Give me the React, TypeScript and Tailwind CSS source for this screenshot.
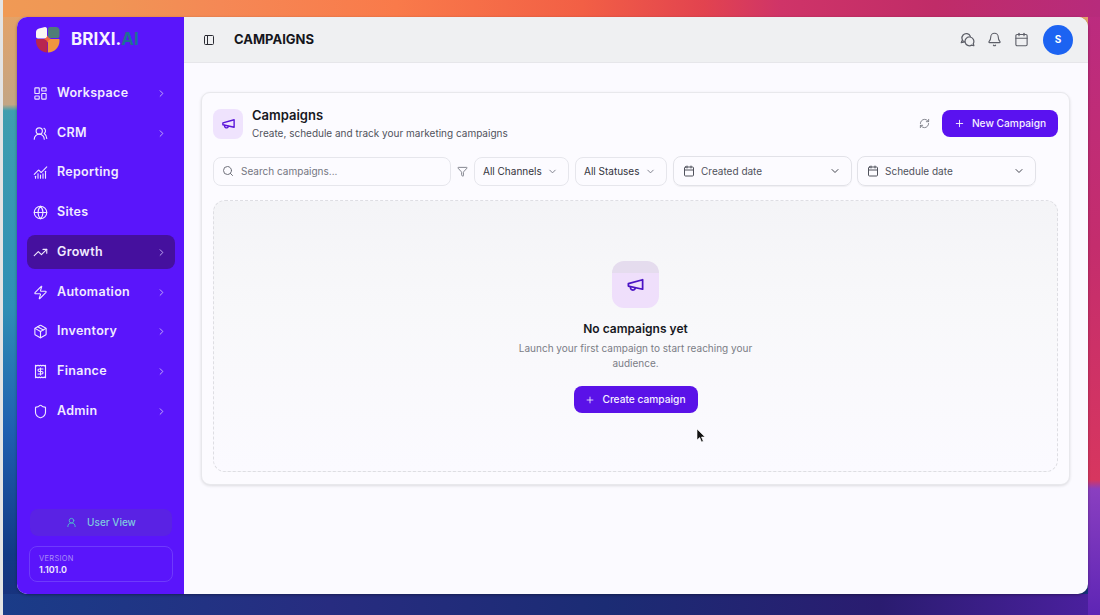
import {
  Bell,
  Calendar,
  ChartNoAxesCombined,
  ChevronDown,
  ChevronRight,
  Funnel,
  Globe,
  LayoutDashboard,
  Package,
  PanelLeft,
  Plus,
  Receipt,
  RefreshCw,
  Search,
  Shield,
  TrendingUp,
  UserRound,
  UsersRound,
  Zap,
} from "lucide-react";

const navItems = [
  { label: "Workspace", icon: LayoutDashboard, arrow: true },
  { label: "CRM", icon: UsersRound, arrow: true },
  { label: "Reporting", icon: ChartNoAxesCombined, arrow: false },
  { label: "Sites", icon: Globe, arrow: false },
  { label: "Growth", icon: TrendingUp, arrow: true, active: true },
  { label: "Automation", icon: Zap, arrow: true },
  { label: "Inventory", icon: Package, arrow: true },
  { label: "Finance", icon: Receipt, arrow: true },
  { label: "Admin", icon: Shield, arrow: true },
];

function Logo() {
  return (
    <svg width="25" height="26" viewBox="0 0 25 26" className="shrink-0">
      <path d="M1 5c0-2 1.500-3 3-3.500L10 0c1.500 0 2 1 2 2v8c0 1-1 1.500-2 1.500H3c-1.200 0-2-.8-2-2z" fill="#fbf7f4" />
      <path d="M13 2c0-1.200 1-2 2-2h6c2 0 3.500 1.500 3.500 3.500V9c0 1.500-1 2-2 2H15c-1 0-2-.5-2-2z" fill="#4f7d78" />
      <path d="M1 13c0-.6.500-1 1-1h9.500c.6 0 1 .4 1 1v12.500C6 25.500 1 20.500 1 14z" fill="#b8264f" />
      <path d="M13 13c0-.6.400-1 1-1h9.500c.6 0 1 .4 1 1v1c0 6-5 11.500-11.500 11.500z" fill="#f0963f" />
      <path d="M12.500 8.500l1.200 2.300 2.300 1.200-2.300 1.200-1.200 2.300-1.200-2.300L9 12l2.300-1.200z" fill="#f4683c" />
    </svg>
  );
}

function ChatIcon() {
  return (
    <svg width="15" height="15" viewBox="0 0 24 24" fill="none" stroke="currentColor" strokeWidth="2" strokeLinecap="round" strokeLinejoin="round">
      <path d="M8 16.200A7 7 0 1 1 16.600 7" />
      <path d="M3.500 13.500 2 17l3.800-.9" />
      <path d="M15.500 8a7 7 0 0 1 5.700 10.500l1 3.500-3.600-1A7 7 0 1 1 15.500 8z" />
    </svg>
  );
}

function MegaphoneIcon({ size, className }: { size: number; className: string }) {
  return (
    <svg width={size} height={size} viewBox="0 0 24 24" fill="none" stroke="currentColor" strokeWidth="2.200" strokeLinecap="round" strokeLinejoin="round" className={className}>
      <path d="m3 11 18-5v12L3 14v-3z" />
      <path d="M11.600 16.800a3 3 0 1 1-5.800-1.600" />
    </svg>
  );
}

function FilterSelect({ label, width }: { label: string; width: string }) {
  return (
    <div className={`flex h-[29px] items-center justify-between rounded-lg border border-[#e6e6ec] pl-[8px] pr-[10px] text-[10px] text-[#33343d] ${width}`}>
      <span>{label}</span>
      <ChevronDown size={11} className="text-[#777a85]" />
    </div>
  );
}

function DateSelect({ label, width }: { label: string; width: string }) {
  return (
    <div className={`flex h-[30px] items-center justify-between rounded-lg border border-[#e2e2e8] pl-[9px] pr-[10px] shadow-[0_1px_1px_rgba(0,0,0,0.05)] ${width}`}>
      <span className="flex items-center gap-[6px] text-[10px] text-[#50525c]">
        <Calendar size={12} className="text-[#50525c]" />
        {label}
      </span>
      <ChevronDown size={12} className="text-[#44464f]" />
    </div>
  );
}

export default function App() {
  return (
    <div className="h-[615px] w-[1100px] overflow-hidden pl-[17px] pr-[12px] pt-[17px] pb-[21px] font-['Inter',sans-serif] [background:linear-gradient(90deg,#e4e4e4,#e4e4e4)_left_top/3px_100%_no-repeat,linear-gradient(90deg,#f09a55_0%,#f09555_10%,#f58855_20%,#f97a4a_36%,#f25f45_53%,#e2434f_64%,#cf3468_71%,#c02c68_85%,#b72b7c_100%)_left_top/100%_17px_no-repeat,linear-gradient(180deg,#bb2b80_0%,#c42d6d_40%,#d7365f_78%,#8a3fc0_79.500%,#5e25b5_100%)_right_top/12px_100%_no-repeat,linear-gradient(90deg,#1a3c88_0%,#272c80_30%,#1b2c74_55%,#2a1c70_80%,#4c20a0_100%)_left_bottom/100%_21px_no-repeat,linear-gradient(180deg,#e9a263_0%,#c3a584_17%,#3f9eaf_18%,#2f8fb5_50%,#1f5fb0_70%,#123a85_90%,#1a2f7a_100%)]">
      <div className="relative flex h-full w-[1071px] overflow-hidden rounded-[10px] bg-[#fbfaff] shadow-[0_1px_3px_rgba(0,0,0,0.35)]">
        {/* Sidebar */}
        <aside className="flex w-[167px] shrink-0 flex-col bg-[#5a15fb] pl-[10px] pr-[9px] pb-[12px]">
          <div className="flex h-[46px] items-center gap-[11px] pl-[8px]">
            <Logo />
            <span className="text-[17px] font-bold text-[#f7f3ff]">
              BRIXI.<span className="text-[#1d6f95]">AI</span>
            </span>
          </div>

          <nav className="mt-[13.250px] flex flex-col gap-[5.750px]">
            {navItems.map((item) => (
              <div
                key={item.label}
                className={`flex h-[34px] items-center rounded-lg pl-[6px] pr-[8px] ${
                  item.active ? "bg-[#45109e]" : ""
                }`}
              >
                <item.icon size={15} strokeWidth={1.800} className="shrink-0 text-[#efe8ff]" />
                <span className="ml-[9px] flex-1 text-[12.500px] font-semibold tracking-[0.3px] text-[#f1ebff]">
                  {item.label}
                </span>
                {item.arrow && <ChevronRight size={11} className="text-[#c9b5fb]" />}
              </div>
            ))}
          </nav>

          <div className="mx-[3px] mt-auto flex h-[27px] items-center justify-center gap-[10px] rounded-lg bg-[#5a22e4]">
            <UserRound size={11} className="text-[#4fb8cf]" />
            <span className="text-[10px] font-medium text-[#7fc8e0]">User View</span>
          </div>

          <div className="mx-[2px] mt-[10px] flex h-[36px] flex-col justify-center rounded-lg border border-[#6f3afc] pl-[9px]">
            <span className="text-[7.500px] leading-[11px] tracking-[0.3px] text-[#a98cf8]">VERSION</span>
            <span className="text-[9px] font-semibold leading-[12px] text-[#f1ebff]">1.101.0</span>
          </div>
        </aside>

        {/* Main */}
        <main className="flex min-w-0 flex-1 flex-col">
          <header className="flex h-[46px] items-center border-b border-[#e6e6ea] bg-[#eff0f2] pl-[19px] pr-[15px]">
            <PanelLeft size={12} strokeWidth={2} className="text-[#2a2b33]" />
            <h1 className="ml-[19px] text-[13px] font-bold text-[#15161c]">CAMPAIGNS</h1>
            <div className="ml-auto flex items-center gap-[12px] text-[#5d5f68]">
              <ChatIcon />
              <Bell size={15} strokeWidth={1.800} />
              <Calendar size={15} strokeWidth={1.800} />
              <div className="ml-[2px] flex h-[30px] w-[30px] items-center justify-center rounded-full bg-[#1c63f2] text-[10px] font-bold text-white">
                S
              </div>
            </div>
          </header>

          <div className="pl-[17px] pr-[18px] pt-[29px]">
            <section className="h-[393px] rounded-[9px] border border-[#e8e8ec] bg-[#fcfbff] px-[11px] pt-[14px] shadow-[0_1px_3px_rgba(0,0,0,0.12)]">
              <div className="flex items-center">
                <div className="flex h-[30px] w-[30px] items-center justify-center rounded-lg bg-[#efe3fd]">
                  <MegaphoneIcon size={15} className="text-[#5a15d9]" />
                </div>
                <div className="ml-[9px]">
                  <h2 className="text-[13px] font-semibold leading-[16px] text-[#17181e]">Campaigns</h2>
                  <p className="mt-[3px] text-[10px] leading-[14px] text-[#50525c]">
                    Create, schedule and track your marketing campaigns
                  </p>
                </div>
                <RefreshCw size={11} className="ml-auto text-[#7a7c85]" />
                <button className="ml-[12px] flex h-[27px] w-[116px] items-center justify-center gap-[7px] rounded-lg bg-[#5a12f0] text-[10.200px] font-medium text-[#f5f0ff]">
                  <Plus size={11} />
                  New Campaign
                </button>
              </div>

              <div className="mt-[16px] flex items-center">
                <div className="flex h-[29px] w-[238px] items-center gap-[7px] rounded-lg border border-[#e6e6ec] pl-[8px] text-[10px] text-[#74767f]">
                  <Search size={12} className="text-[#6f717a]" />
                  Search campaigns...
                </div>
                <Funnel size={11} className="ml-[6px] text-[#7a7c85]" />
                <div className="ml-[6px] flex gap-[6px]">
                  <FilterSelect label="All Channels" width="w-[95px]" />
                  <FilterSelect label="All Statuses" width="w-[92px]" />
                </div>
                <div className="ml-[6px] flex gap-[5px]">
                  <DateSelect label="Created date" width="w-[179px]" />
                  <DateSelect label="Schedule date" width="w-[179px]" />
                </div>
              </div>

              <div className="mt-[14px] flex h-[272px] flex-col items-center rounded-xl border border-dashed border-[#dedee3] bg-[linear-gradient(180deg,#f4f4f7_0%,#f8f8fa_40%,#fbfaff_100%)] pt-[60px]">
                <div className="flex h-[47px] w-[47px] items-center justify-center rounded-xl bg-[linear-gradient(180deg,#e5dcee_0%,#e5dcee_25%,#efdffb_25%,#efdffb_100%)]">
                  <MegaphoneIcon size={19} className="text-[#4a12c4]" />
                </div>
                <h3 className="mt-[13px] text-[12px] font-semibold leading-[16px] text-[#17181e]">No campaigns yet</h3>
                <p className="mt-[4px] w-[250px] text-center text-[10px] leading-[15px] text-[#7b7d86]">
                  Launch your first campaign to start reaching your audience.
                </p>
                <button className="mt-[15px] flex h-[27px] w-[124px] items-center justify-center gap-[7px] rounded-lg bg-[#5a12e8] text-[10.200px] font-medium text-[#f5f0ff]">
                  <Plus size={10} />
                  Create campaign
                </button>
              </div>
            </section>
          </div>

          {/* Mouse cursor */}
          <svg width="10" height="15" viewBox="0 0 10 15" className="absolute left-[679px] top-[411px]">
            <path d="M1 1v11l2.700-2.500L5.500 14l1.800-.8L5.500 9H9z" fill="#111" stroke="#fff" strokeWidth="0.600" />
          </svg>
        </main>
      </div>
    </div>
  );
}
